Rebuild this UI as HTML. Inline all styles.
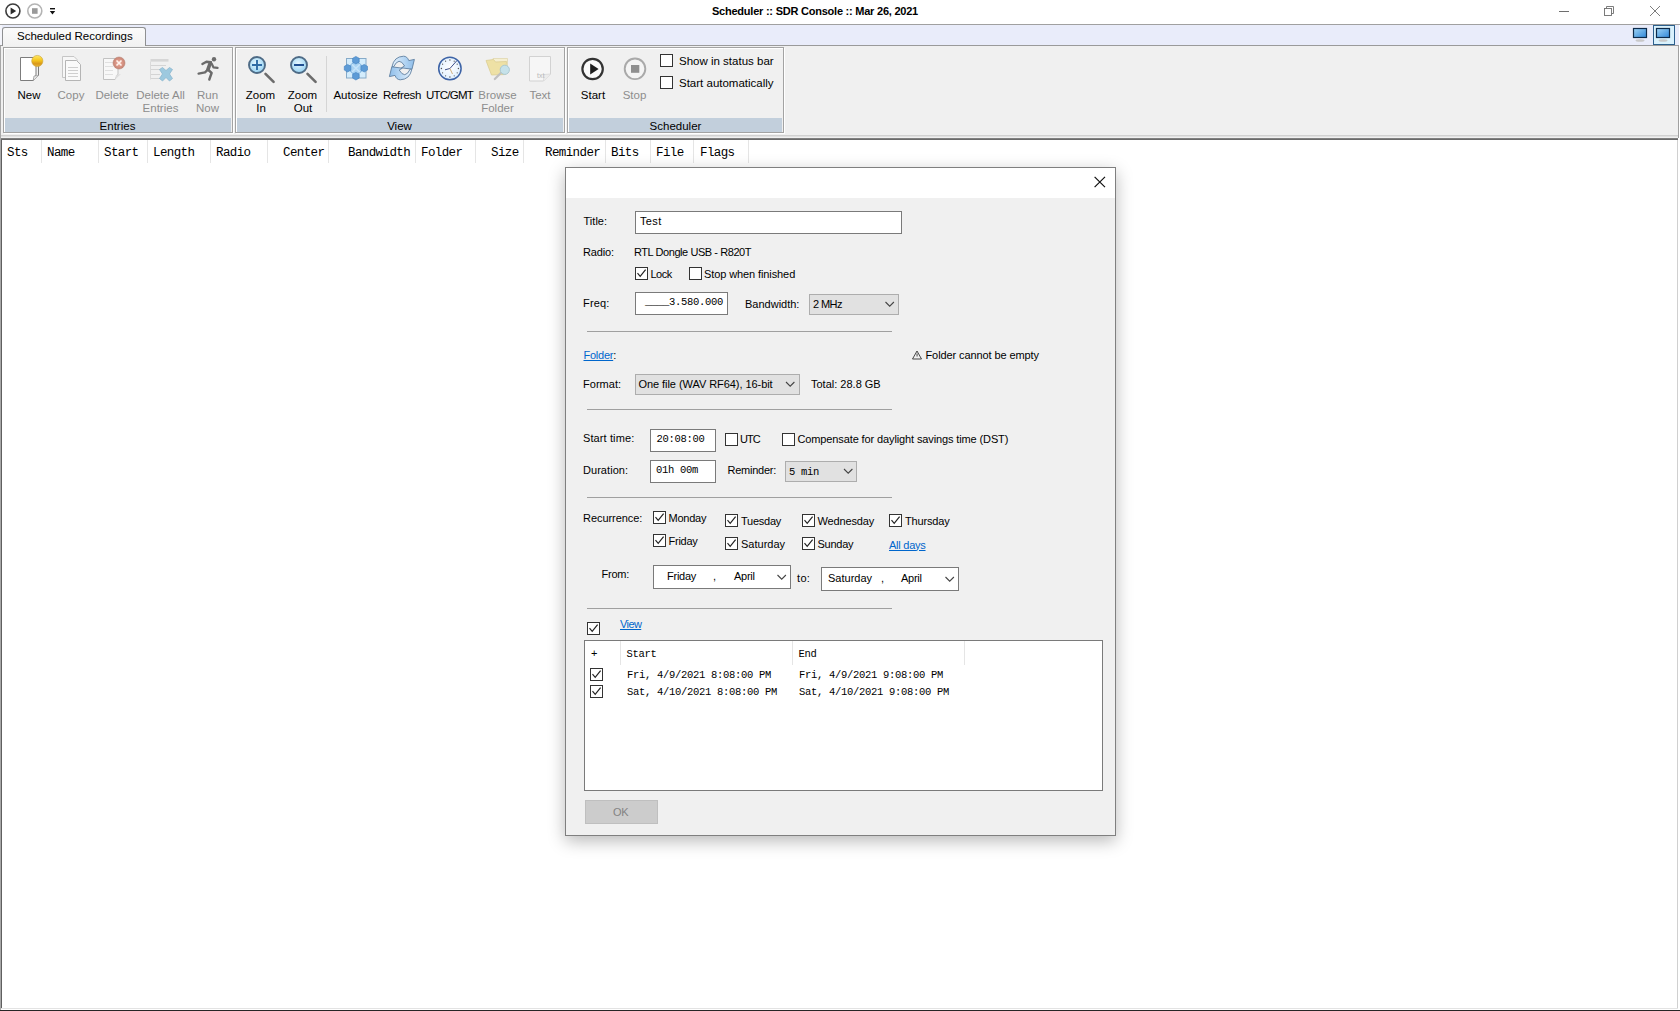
<!DOCTYPE html>
<html><head><meta charset="utf-8">
<style>
*{box-sizing:border-box;margin:0;padding:0}
html,body{width:1680px;height:1011px;overflow:hidden;background:#fff;font-family:"Liberation Sans",sans-serif;color:#000}
.a{position:absolute}
.t{position:absolute;line-height:1;white-space:nowrap}
.rb{font-size:11.5px}
.c{position:absolute;line-height:1;white-space:nowrap;width:100px;margin-left:-50px;text-align:center;font-size:11.5px}
.dis{color:#8d8d8d}
.m{font-family:"Liberation Mono",monospace}
.grp{position:absolute;top:47px;height:86px;border:1px solid #a3a3a3;background:#f0f0f0;box-shadow:inset 1px 1px 0 #fff, 1px 1px 0 #fff}
.gl{position:absolute;left:1px;right:1px;bottom:0;height:14px;background:#c2cfdc}
.hs{position:absolute;top:140px;width:1px;height:23px;background:#e5e5e5}
.dl{font-size:11px;letter-spacing:-0.25px}
.cb{position:absolute;width:13px;height:13px;border:1px solid #333;background:#fff}
.tb{position:absolute;border:1px solid #7a7a7a;background:#fff}
.cmb{position:absolute;border:1px solid #adadad;background:#e1e1e1}
.sep{position:absolute;height:1px;background:#a0a0a0;left:587px;width:305px}
.lnk{color:#0066cc;text-decoration:underline}
</style></head><body>

<!-- ===== TITLE BAR ===== -->
<div id="titlebar" class="a" style="left:0;top:0;width:1680px;height:24px;background:#fff"></div>
<div class="t" style="left:712px;top:5.7px;font-size:11px;font-weight:bold;letter-spacing:-0.23px">Scheduler :: SDR Console :: Mar 26, 2021</div>

<div class="a" style="left:0;top:24px;width:1680px;height:1px;background:#a0a0a0"></div>
<!-- tab strip -->
<div class="a" style="left:0;top:25px;width:1679px;height:20px;background:#e9ecfa"></div>


<!-- title icons -->
<svg class="a" style="left:0;top:0" width="70" height="24">
  <circle cx="12.9" cy="11" r="7" fill="#fff" stroke="#3c3c3c" stroke-width="1.6"/>
  <path d="M10.6 7.4 L16.2 11 L10.6 14.6 Z" fill="#2a2a2a"/>
  <circle cx="34.8" cy="11" r="7" fill="#fff" stroke="#b4b4b4" stroke-width="1.6"/>
  <rect x="32" y="8.2" width="5.6" height="5.6" fill="#9a9a9a"/>
  <rect x="50" y="8" width="5" height="1.4" fill="#111"/>
  <path d="M49.8 11 L55.2 11 L52.5 14.4 Z" fill="#111"/>
</svg>
<!-- window controls -->
<svg class="a" style="left:1540px;top:0" width="140" height="24">
  <rect x="19" y="11" width="10" height="1" fill="#6e6e6e"/>
  <rect x="64.5" y="8.5" width="7" height="7" fill="none" stroke="#6e6e6e" stroke-width="0.9"/>
  <path d="M66.5 8.5 V6.5 H73.5 V13.5 H71.5" fill="none" stroke="#6e6e6e" stroke-width="0.9"/>
  <path d="M110 6 L120 16 M120 6 L110 16" stroke="#6e6e6e" stroke-width="0.9"/>
</svg>

<!-- tab -->
<div class="a" style="left:2px;top:27px;width:144px;height:20px;border:1px solid #8f9092;border-bottom:none;border-radius:3px 3px 0 0;background:linear-gradient(#fbfbfb,#f1f1f1)"></div>
<div class="t" style="left:17px;top:30.8px;font-size:11.5px">Scheduled Recordings</div>
<div class="a" style="left:146px;top:45px;width:1533px;height:1px;background:#9a9a9a"></div>
<div class="a" style="left:0;top:25px;width:2px;height:20px;background:#f4f5fb"></div><div class="a" style="left:0;top:45px;width:2px;height:1px;background:#9a9a9a"></div>

<!-- monitor icons -->
<div class="a" style="left:1653px;top:25px;width:22px;height:20px;border:1px solid #2c5f8c;background:#d9f1fc"></div>
<svg class="a" style="left:1630px;top:25px" width="50" height="20">
  <defs><linearGradient id="scr" x1="0" y1="0" x2="1" y2="1"><stop offset="0" stop-color="#9fd4f5"/><stop offset="1" stop-color="#2f86d8"/></linearGradient></defs>
  <rect x="3.5" y="3.5" width="13" height="9" fill="url(#scr)" stroke="#0d2a4a" stroke-width="1.2"/>
  <ellipse cx="10" cy="15.5" rx="4.5" ry="1.3" fill="#c8c8c8"/>
  <rect x="26.5" y="3.5" width="13" height="9" fill="url(#scr)" stroke="#0d2a4a" stroke-width="1.2"/>
  <ellipse cx="33" cy="15.5" rx="4.5" ry="1.3" fill="#c8c8c8"/>
</svg>

<!-- ribbon background -->
<div class="a" style="left:1px;top:46px;width:1678px;height:92px;background:#f0f0f0"></div>
<div class="a" style="left:0;top:46px;width:1px;height:964px;background:#a8a8a8"></div><div class="a" style="left:1px;top:138px;width:1px;height:871px;background:#5f5f5f"></div>
<div class="a" style="left:1678px;top:46px;width:1px;height:92px;background:#a0a0a0"></div>
<div class="a" style="left:1px;top:135px;width:1677px;height:2px;background:linear-gradient(#c9c9c9,#e9e9e9)"></div>
<div class="a" style="left:1px;top:138px;width:1677px;height:2px;background:linear-gradient(#8a8a8a,#5f5f5f)"></div>

<div class="grp" style="left:3px;width:230px"><div class="gl"></div></div>
<div class="grp" style="left:235px;width:330px"><div class="gl"></div></div>
<div class="grp" style="left:567px;width:217px"><div class="gl"></div></div>

<!-- labels -->
<div class="c" style="left:29px;top:89.8px">New</div>
<div class="c dis" style="left:71px;top:89.8px">Copy</div>
<div class="c dis" style="left:112px;top:89.8px">Delete</div>
<div class="c dis" style="left:160.5px;top:89.8px">Delete All</div>
<div class="c dis" style="left:160.5px;top:102.8px">Entries</div>
<div class="c dis" style="left:207.5px;top:89.8px">Run</div>
<div class="c dis" style="left:207.5px;top:102.8px">Now</div>
<div class="c" style="left:117.5px;top:120.5px">Entries</div>

<div class="c" style="left:260.5px;top:89.8px">Zoom</div>
<div class="c" style="left:261px;top:102.8px">In</div>
<div class="c" style="left:302.5px;top:89.8px">Zoom</div>
<div class="c" style="left:303px;top:102.8px">Out</div>
<div class="a" style="left:326px;top:56px;width:1px;height:56px;background:#d5d5d5"></div>
<div class="c" style="left:355.5px;top:89.8px">Autosize</div>
<div class="c" style="left:402px;top:89.8px;letter-spacing:-0.3px">Refresh</div>
<div class="c" style="left:449.5px;top:89.8px;letter-spacing:-0.75px">UTC/GMT</div>
<div class="c dis" style="left:497.5px;top:89.8px">Browse</div>
<div class="c dis" style="left:497.5px;top:102.8px">Folder</div>
<div class="c dis" style="left:540px;top:89.8px">Text</div>
<div class="c" style="left:399.5px;top:120.5px">View</div>

<div class="c" style="left:593px;top:89.8px">Start</div>
<div class="c dis" style="left:634.5px;top:89.8px">Stop</div>
<div class="c" style="left:675.5px;top:120.5px">Scheduler</div>
<div class="cb" style="left:660px;top:54px"></div>
<div class="t rb" style="left:679px;top:55.5px">Show in status bar</div>
<div class="cb" style="left:660px;top:76px"></div>
<div class="t rb" style="left:679px;top:77.5px">Start automatically</div>

<!-- ribbon icons -->
<svg class="a" style="left:0;top:0;pointer-events:none" width="800" height="100">
  <defs>
    <linearGradient id="gold" x1="0" y1="0" x2="0" y2="1"><stop offset="0" stop-color="#ffe866"/><stop offset="0.45" stop-color="#f4c51e"/><stop offset="0.75" stop-color="#d9971a"/><stop offset="1" stop-color="#e8b53a"/></linearGradient>
    <radialGradient id="lens" cx="0.45" cy="0.4" r="0.6"><stop offset="0" stop-color="#e6f7ff"/><stop offset="1" stop-color="#96d2f2"/></radialGradient>
    <radialGradient id="face" cx="0.5" cy="0.45" r="0.6"><stop offset="0" stop-color="#ffffff"/><stop offset="0.8" stop-color="#e4f2ff"/><stop offset="1" stop-color="#a9cdf2"/></radialGradient>
    <radialGradient id="redb" cx="0.5" cy="0.5" r="0.6"><stop offset="0" stop-color="#f0b0a0"/><stop offset="1" stop-color="#c07a6a"/></radialGradient>
  </defs>
  <!-- New -->
  <path d="M20.5 57.5 H36 V75 L33 80.5 H20.5 Z" fill="#fff" stroke="#7c7c7c" stroke-width="1"/>
  <path d="M38.5 64 V75.5 L33.2 80.5" fill="none" stroke="#7c7c7c" stroke-width="1"/>
  <path d="M33.2 80.5 L34 76 L38.5 75.5" fill="#e8e8e8" stroke="#9a9a9a" stroke-width="0.8"/>
  <circle cx="37.3" cy="61" r="5.6" fill="url(#gold)" stroke="#c9a235" stroke-width="0.6"/>
  <!-- Copy (disabled) -->
  <path d="M62.5 56.5 H74 L77 59.5 V77.5 H62.5 Z" fill="#f7f7f7" stroke="#c6c6c6" stroke-width="1"/>
  <path d="M65.5 60.5 H76.5 L80.5 64.5 V80.5 H65.5 Z" fill="#fafafa" stroke="#b5b5b5" stroke-width="1"/>
  <g stroke="#cfcfcf" stroke-width="1"><path d="M68 67.5 H78 M68 70.5 H78 M68 73.5 H78 M68 76.5 H78"/></g>
  <!-- Delete (disabled) -->
  <path d="M103.5 58.5 H118 V74 L115 79.5 H103.5 Z" fill="#f8f8f8" stroke="#c2c2c2" stroke-width="1"/>
  <path d="M115 79.5 L116 75 L121 74 Z" fill="#dcdcdc"/>
  <g stroke="#e0e0e0" stroke-width="1"><path d="M105 62.5 H113 M105 66.5 H113 M105 70.5 H113 M105 74.5 H113"/></g>
  <circle cx="119" cy="63" r="6" fill="url(#redb)" stroke="#b98575" stroke-width="0.6"/>
  <path d="M116.5 60.5 L121.5 65.5 M121.5 60.5 L116.5 65.5" stroke="#fff3ee" stroke-width="1.6"/>
  <!-- Delete All (disabled) -->
  <rect x="150.5" y="59" width="18" height="2.6" fill="#d6d6d6"/>
  <path d="M150.5 61.5 V79.5" stroke="#dadada" stroke-width="1"/>
  <g stroke="#d4d4d4" stroke-width="1"><path d="M151 65.5 H166 M151 69.5 H160 M151 74.5 H160 M151 78.5 H160"/></g>
  <path d="M159.5 69.5 L162.5 67.5 L166 70.5 L169.5 67.5 L172.5 69.5 L169.5 74 L172.5 78.5 L169.5 81 L166 77.5 L162.5 81 L159.5 78.5 L162.5 74 Z" fill="#9dc9df" stroke="#86b3cc" stroke-width="0.7"/>
  <!-- Run Now -->
  <circle cx="214" cy="59.3" r="2.2" fill="#6b6b6b"/>
  <g fill="none" stroke="#6b6b6b" stroke-linecap="round" stroke-linejoin="round">
    <path d="M210.3 62.8 L207.9 69.6" stroke-width="3.6"/>
    <path d="M202.4 64 L206.4 61.7 L211 62.2" stroke-width="2.4"/>
    <path d="M211.6 63.6 L213.4 67.3 L217.6 67.9" stroke-width="2.2"/>
    <path d="M207.4 70 L205 72.4 L198.6 73.6" stroke-width="2.4"/>
    <path d="M208.6 70.2 L211.6 73 L209.3 79.5" stroke-width="2.4"/>
  </g>
  <!-- Zoom In -->
  <path d="M265.5 73.8 L273.6 81.8" stroke="#6c6c6c" stroke-width="2.6" stroke-linecap="round"/>
  <circle cx="257" cy="65" r="8" fill="url(#lens)" stroke="#4e6b86" stroke-width="1.9"/>
  <path d="M252 65 H262 M257 60 V70" stroke="#2d6ba6" stroke-width="1.9"/>
  <!-- Zoom Out -->
  <path d="M307.5 73.8 L315.6 81.8" stroke="#6c6c6c" stroke-width="2.6" stroke-linecap="round"/>
  <circle cx="299" cy="65" r="8" fill="url(#lens)" stroke="#4e6b86" stroke-width="1.9"/>
  <path d="M294 65 H304" stroke="#1f4f92" stroke-width="2"/>
  <!-- Autosize -->
  <rect x="346.5" y="58.5" width="19.5" height="19.5" fill="#d3ecfc" stroke="#86aac8" stroke-width="1"/>
  <path d="M355.9 60.2 L364.2 68.2 L355.9 76.2 L347.6 68.2 Z" fill="#a9d3f3" stroke="#7fb3df" stroke-width="1.2"/>
  <path d="M351.8 64.2 L360 72.2 M360 64.2 L351.8 72.2" stroke="#c6e4fa" stroke-width="1.4"/>
  <g fill="#5d9bd6" stroke="#3f7fbf" stroke-width="0.6">
    <path d="M355.9 56.4 L359.2 58.3 V62.1 L355.9 64 L352.6 62.1 V58.3 Z"/>
    <path d="M355.9 72.4 L359.2 74.3 V78.1 L355.9 80 L352.6 78.1 V74.3 Z"/>
    <path d="M347.6 64.4 L350.9 66.3 V70.1 L347.6 72 L344.3 70.1 V66.3 Z"/>
    <path d="M364.2 64.4 L367.5 66.3 V70.1 L364.2 72 L360.9 70.1 V66.3 Z"/>
  </g>
  <!-- Refresh -->
  <defs><linearGradient id="rf" x1="0" y1="0" x2="1" y2="0"><stop offset="0" stop-color="#e6f2fc"/><stop offset="0.5" stop-color="#b9d8f4"/><stop offset="1" stop-color="#8ebde9"/></linearGradient></defs>
  <path id="rfa" d="M392 66.6 Q394 56.6 403.5 56.2 Q407.2 56.2 408.8 60.6 L414.4 59.4 L412 69.2 L401.5 67.8 L404.6 66 Q399 56.2 393.6 66.8 Z" fill="url(#rf)" stroke="#5f7fa0" stroke-width="0.9" stroke-linejoin="round"/>
  <use href="#rfa" transform="rotate(180 401.9 68)"/>
  <!-- UTC/GMT -->
  <circle cx="449.9" cy="68.5" r="11.2" fill="url(#face)" stroke="#3d63a6" stroke-width="1.5"/>
  <g fill="#555"><circle cx="449.9" cy="60" r="0.7"/><circle cx="449.9" cy="77" r="0.7"/><circle cx="441.4" cy="68.5" r="0.7"/><circle cx="458.4" cy="68.5" r="0.7"/><circle cx="445.6" cy="61.2" r="0.6"/><circle cx="454.2" cy="61.2" r="0.6"/><circle cx="442.6" cy="64.2" r="0.6"/><circle cx="457.2" cy="64.2" r="0.6"/><circle cx="442.6" cy="72.8" r="0.6"/><circle cx="457.2" cy="72.8" r="0.6"/><circle cx="445.6" cy="75.8" r="0.6"/><circle cx="454.2" cy="75.8" r="0.6"/></g>
  <path d="M449.9 68.5 L457 60.5 M449.9 68.5 L445 69.8" stroke="#3b4f8a" stroke-width="1"/>
  <path d="M449.9 68.5 L452.5 74" stroke="#c79a5a" stroke-width="0.8"/>
  <!-- Browse Folder (disabled) -->
  <g opacity="0.85">
  <path d="M493 58.5 H507.5 V72 H493 Z" fill="#f6efcc" stroke="#ddd3a4" stroke-width="0.8"/>
  <path d="M486 60.5 L493.5 59.5 L495.5 62 L506.5 61.5 L505.5 74.5 L491.5 75 Z" fill="#eedf98" stroke="#d8c883" stroke-width="0.8"/>
  <path d="M494.8 79 L500.8 73" stroke="#b8b8b8" stroke-width="2.2" stroke-linecap="round"/>
  <circle cx="504.8" cy="69.8" r="4.6" fill="#bfe0ea" stroke="#9fc3cc" stroke-width="1"/>
  </g>
  <!-- Text (disabled) -->
  <path d="M529.5 56.5 H550.5 V74 L543.5 81 H529.5 Z" fill="#f6f6f6" stroke="#d2d2d2" stroke-width="1"/>
  <path d="M543.5 81 L544 74.5 L550.5 74" fill="#ececec" stroke="#d8d8d8" stroke-width="0.8"/>
  <text x="537" y="77.5" font-family="Liberation Sans" font-size="7" fill="#b8b8b8">txt</text>
  <!-- Start -->
  <circle cx="592.6" cy="69" r="10.2" fill="#fafafa" stroke="#333" stroke-width="2.2"/>
  <path d="M590.2 63.4 L598.6 69 L590.2 74.6 Z" fill="#1e1e1e"/>
  <!-- Stop -->
  <circle cx="635" cy="68.8" r="10.3" fill="#f4f4f4" stroke="#a9a9a9" stroke-width="1.9"/>
  <rect x="631" y="65" width="8.3" height="7.8" fill="#8f8f8f"/>
</svg>



<!-- ===== LIST ===== -->
<div class="a" style="left:1677px;top:140px;width:1px;height:869px;background:#d0d0d0"></div>
<div class="a" style="left:1px;top:1008px;width:1677px;height:1px;background:#e3e3e3"></div>
<div class="a" style="left:0;top:1010px;width:1680px;height:1px;background:#262626"></div>
<div style="font-size:12.5px;letter-spacing:-0.6px" class="m">
<div class="t" style="left:7px;top:147.2px">Sts</div>
<div class="t" style="left:47px;top:147.2px">Name</div>
<div class="t" style="left:104px;top:147.2px">Start</div>
<div class="t" style="left:153px;top:147.2px">Length</div>
<div class="t" style="left:216px;top:147.2px">Radio</div>
<div class="t" style="left:283px;top:147.2px">Center</div>
<div class="t" style="left:348px;top:147.2px">Bandwidth</div>
<div class="t" style="left:421px;top:147.2px">Folder</div>
<div class="t" style="left:491px;top:147.2px">Size</div>
<div class="t" style="left:545px;top:147.2px">Reminder</div>
<div class="t" style="left:611px;top:147.2px">Bits</div>
<div class="t" style="left:656px;top:147.2px">File</div>
<div class="t" style="left:700px;top:147.2px">Flags</div>
</div>
<div class="hs" style="left:41px"></div>
<div class="hs" style="left:98px"></div>
<div class="hs" style="left:147px"></div>
<div class="hs" style="left:210px"></div>
<div class="hs" style="left:267px"></div>
<div class="hs" style="left:328px"></div>
<div class="hs" style="left:415px"></div>
<div class="hs" style="left:475px"></div>
<div class="hs" style="left:523px"></div>
<div class="hs" style="left:605px"></div>
<div class="hs" style="left:650px"></div>
<div class="hs" style="left:693px"></div>
<div class="hs" style="left:748px"></div>

<!-- ===== DIALOG ===== -->
<div class="a" style="left:565px;top:167px;width:551px;height:669px;border:1px solid #7f7f7f;background:#f0f0f0;box-shadow:0 5px 16px rgba(0,0,0,0.28)"></div>
<div class="a" style="left:566px;top:168px;width:549px;height:30px;background:#fff"></div>
<svg class="a" style="left:1090px;top:172px" width="20" height="20"><path d="M4.6 4.8 L15 15.2 M15 4.8 L4.6 15.2" stroke="#111" stroke-width="1.2"/></svg>
<div class="dl">
<div class="t" style="left:583.5px;top:215.7px;letter-spacing:0.03px">Title:</div>
<div class="tb" style="left:635px;top:211px;width:267px;height:23px"></div>
<div class="t" style="left:640px;top:215.7px;letter-spacing:0.35px">Test</div>
<div class="t" style="left:583px;top:246.7px;letter-spacing:-0.13px">Radio:</div>
<div class="t" style="left:634px;top:246.7px;letter-spacing:-0.43px">RTL Dongle USB - R820T</div>
<div class="cb" style="left:635px;top:267px"><svg width="11" height="11" style="position:absolute;left:0;top:0"><path d="M1.5 5.2 L4.2 8.3 L9.6 1.6" fill="none" stroke="#222" stroke-width="1.2"/></svg></div>
<div class="t" style="left:650.5px;top:268.7px;letter-spacing:-0.5px">Lock</div>
<div class="cb" style="left:689px;top:267px"></div>
<div class="t" style="left:704px;top:268.7px;letter-spacing:-0.1px">Stop when finished</div>
<div class="t" style="left:583px;top:298.3px;letter-spacing:0.17px">Freq:</div>
<div class="tb" style="left:635px;top:292px;width:93px;height:23px"></div>
<div class="t" style="left:745px;top:298.8px;letter-spacing:0px">Bandwidth:</div>
<div class="cmb" style="left:809px;top:294px;width:90px;height:21px"></div>
<div class="t" style="left:813px;top:299.3px;letter-spacing:-0.6px">2 MHz</div>
<div class="sep" style="top:331px"></div>
<div class="t" style="left:583.5px;top:350.1px"><span class="lnk">Folder</span>:</div>
<div class="t" style="left:925.5px;top:349.7px;letter-spacing:-0.1px">Folder cannot be empty</div>
<div class="t" style="left:583px;top:378.7px;letter-spacing:0.04px">Format:</div>
<div class="cmb" style="left:635px;top:374px;width:165px;height:21px"></div>
<div class="t" style="left:638.5px;top:379.3px;letter-spacing:-0.06px">One file (WAV RF64), 16-bit</div>
<div class="t" style="left:811px;top:378.7px;letter-spacing:0px">Total: 28.8 GB</div>
<div class="sep" style="top:409px"></div>
<div class="t" style="left:583px;top:432.5px;letter-spacing:0.11px">Start time:</div>
<div class="tb" style="left:650px;top:429px;width:66px;height:23px"></div>
<div class="cb" style="left:725px;top:433px"></div>
<div class="t" style="left:740px;top:434px;letter-spacing:-0.9px">UTC</div>
<div class="cb" style="left:782px;top:433px"></div>
<div class="t" style="left:797.5px;top:434px;letter-spacing:-0.12px">Compensate for daylight savings time (DST)</div>
<div class="t" style="left:583px;top:465.3px;letter-spacing:0.05px">Duration:</div>
<div class="tb" style="left:650px;top:460px;width:66px;height:23px"></div>
<div class="t" style="left:727.5px;top:465.3px">Reminder:</div>
<div class="cmb" style="left:785px;top:461px;width:72px;height:21px"></div>
<div class="sep" style="top:497px"></div>
<div class="t" style="left:583px;top:512.6px;letter-spacing:-0.06px">Recurrence:</div>
<div class="cb" style="left:653px;top:511px"><svg width="11" height="11" style="position:absolute;left:0;top:0"><path d="M1.5 5.2 L4.2 8.3 L9.6 1.6" fill="none" stroke="#222" stroke-width="1.2"/></svg></div>
<div class="t" style="left:668.5px;top:512.6px">Monday</div>
<div class="cb" style="left:725px;top:514px"><svg width="11" height="11" style="position:absolute;left:0;top:0"><path d="M1.5 5.2 L4.2 8.3 L9.6 1.6" fill="none" stroke="#222" stroke-width="1.2"/></svg></div>
<div class="t" style="left:741px;top:515.6px">Tuesday</div>
<div class="cb" style="left:802px;top:514px"><svg width="11" height="11" style="position:absolute;left:0;top:0"><path d="M1.5 5.2 L4.2 8.3 L9.6 1.6" fill="none" stroke="#222" stroke-width="1.2"/></svg></div>
<div class="t" style="left:817.5px;top:515.6px;letter-spacing:-0.13px">Wednesday</div>
<div class="cb" style="left:889px;top:514px"><svg width="11" height="11" style="position:absolute;left:0;top:0"><path d="M1.5 5.2 L4.2 8.3 L9.6 1.6" fill="none" stroke="#222" stroke-width="1.2"/></svg></div>
<div class="t" style="left:905px;top:515.6px;letter-spacing:-0.17px">Thursday</div>
<div class="cb" style="left:653px;top:534px"><svg width="11" height="11" style="position:absolute;left:0;top:0"><path d="M1.5 5.2 L4.2 8.3 L9.6 1.6" fill="none" stroke="#222" stroke-width="1.2"/></svg></div>
<div class="t" style="left:668.5px;top:535.6px">Friday</div>
<div class="cb" style="left:725px;top:537px"><svg width="11" height="11" style="position:absolute;left:0;top:0"><path d="M1.5 5.2 L4.2 8.3 L9.6 1.6" fill="none" stroke="#222" stroke-width="1.2"/></svg></div>
<div class="t" style="left:741px;top:538.6px;letter-spacing:0px">Saturday</div>
<div class="cb" style="left:802px;top:537px"><svg width="11" height="11" style="position:absolute;left:0;top:0"><path d="M1.5 5.2 L4.2 8.3 L9.6 1.6" fill="none" stroke="#222" stroke-width="1.2"/></svg></div>
<div class="t" style="left:817.5px;top:538.6px">Sunday</div>
<div class="t lnk" style="left:889px;top:539.6px">All days</div>
<div class="t" style="left:601.5px;top:568.7px">From:</div>
<div class="tb" style="left:653px;top:565px;width:138px;height:24px"></div>
<div class="t" style="left:667px;top:571.3px">Friday</div>
<div class="t" style="left:713px;top:571.3px">,</div>
<div class="t" style="left:734px;top:571.3px">April</div>
<div class="t" style="left:797px;top:573px;letter-spacing:0.35px">to:</div>
<div class="tb" style="left:821px;top:567px;width:138px;height:24px"></div>
<div class="t" style="left:828px;top:573.3px;letter-spacing:0px">Saturday</div>
<div class="t" style="left:881px;top:573.3px">,</div>
<div class="t" style="left:901px;top:573.3px">April</div>
<div class="sep" style="top:608px"></div>
<div class="cb" style="left:587px;top:622px"><svg width="11" height="11" style="position:absolute;left:0;top:0"><path d="M1.5 5.2 L4.2 8.3 L9.6 1.6" fill="none" stroke="#222" stroke-width="1.2"/></svg></div>
<div class="t lnk" style="left:620px;top:618.5px;letter-spacing:-0.6px">View</div>
</div>
<div class="tb" style="left:584px;top:640px;width:519px;height:151px"></div>
<div class="a" style="left:620px;top:641px;width:1px;height:24px;background:#e5e5e5"></div>
<div class="a" style="left:792px;top:641px;width:1px;height:24px;background:#e5e5e5"></div>
<div class="a" style="left:964px;top:641px;width:1px;height:24px;background:#e5e5e5"></div>
<div class="t" style="left:591px;top:648px;font-size:11px">+</div>
<div class="m" style="font-size:10.5px;letter-spacing:-0.3px">
<div class="t" style="left:626.5px;top:648.5px">Start</div>
<div class="t" style="left:798.5px;top:648.5px">End</div>
<div class="t" style="left:627px;top:670px">Fri, 4/9/2021 8:08:00 PM</div>
<div class="t" style="left:627px;top:687px">Sat, 4/10/2021 8:08:00 PM</div>
<div class="t" style="left:799px;top:670px">Fri, 4/9/2021 9:08:00 PM</div>
<div class="t" style="left:799px;top:687px">Sat, 4/10/2021 9:08:00 PM</div>
<div class="t" style="left:645px;top:297px">____3.580.000</div>
<div class="t" style="left:656.5px;top:433.5px">20:08:00</div>
<div class="t" style="left:656px;top:465px">01h 00m</div>
<div class="t" style="left:789px;top:466.5px">5 min</div>
</div>
<div class="cb" style="left:590px;top:668px"><svg width="11" height="11" style="position:absolute;left:0;top:0"><path d="M1.5 5.2 L4.2 8.3 L9.6 1.6" fill="none" stroke="#222" stroke-width="1.2"/></svg></div>
<div class="cb" style="left:590px;top:685px"><svg width="11" height="11" style="position:absolute;left:0;top:0"><path d="M1.5 5.2 L4.2 8.3 L9.6 1.6" fill="none" stroke="#222" stroke-width="1.2"/></svg></div>
<div class="a" style="left:585px;top:800px;width:73px;height:24px;background:#cccccc;border:1px solid #bfbfbf"></div>
<div class="t dl" style="left:613px;top:807px;color:#838383">OK</div>

<!-- chevrons -->
<svg class="a" style="left:0;top:0;pointer-events:none" width="1680" height="1011">
  <g fill="none" stroke="#444" stroke-width="1.1">
    <path d="M885.5 302 L889.7 306.2 L893.9 302"/>
    <path d="M786 382 L790.2 386.2 L794.4 382"/>
    <path d="M844 469 L848.2 473.2 L852.4 469"/>
    <path d="M777.5 575 L781.7 579.2 L785.9 575"/>
    <path d="M945.5 577 L949.7 581.2 L953.9 577"/>
  </g>
  <path d="M917 351 L921.5 359 L912.5 359 Z" fill="none" stroke="#333" stroke-width="0.9"/>
  <rect x="916.6" y="353.5" width="0.9" height="3" fill="#333"/>
</svg>


</body></html>
